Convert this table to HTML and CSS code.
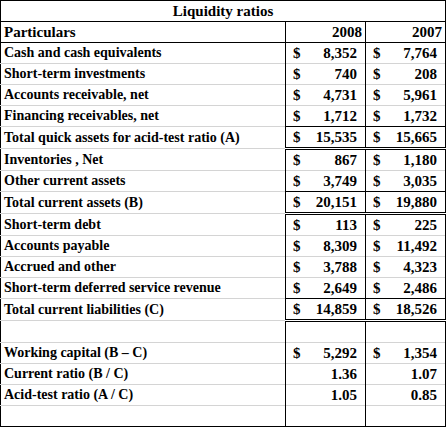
FILE: index.html
```html
<!DOCTYPE html>
<html lang="en">
<head>
    <meta charset="UTF-8">
    <title>Liquidity ratios</title>
    <link rel="stylesheet" href="styles.css">
</head>
<body>
    <table class="ratios">
        <colgroup>
            <col class="c-label">
            <col class="c-num">
            <col class="c-num">
        </colgroup>
        <tr class="title-row">
            <td colspan="3">Liquidity ratios</td>
        </tr>
        <tr class="head-row">
            <td class="label">Particulars</td>
            <td class="year">2008</td>
            <td class="year">2007</td>
        </tr>
        <tr>
            <td class="label">Cash and cash equivalents</td>
            <td class="amt"><span>$</span><span>8,352</span></td>
            <td class="amt"><span>$</span><span>7,764</span></td>
        </tr>
        <tr>
            <td class="label">Short-term investments</td>
            <td class="amt"><span>$</span><span>740</span></td>
            <td class="amt"><span>$</span><span>208</span></td>
        </tr>
        <tr>
            <td class="label">Accounts receivable, net</td>
            <td class="amt"><span>$</span><span>4,731</span></td>
            <td class="amt"><span>$</span><span>5,961</span></td>
        </tr>
        <tr>
            <td class="label">Financing receivables, net</td>
            <td class="amt"><span>$</span><span>1,712</span></td>
            <td class="amt"><span>$</span><span>1,732</span></td>
        </tr>
        <tr class="total">
            <td class="label">Total quick assets for acid-test ratio (A)</td>
            <td class="amt"><span>$</span><span>15,535</span></td>
            <td class="amt"><span>$</span><span>15,665</span></td>
        </tr>
        <tr>
            <td class="label">Inventories , Net</td>
            <td class="amt"><span>$</span><span>867</span></td>
            <td class="amt"><span>$</span><span>1,180</span></td>
        </tr>
        <tr>
            <td class="label">Other current assets</td>
            <td class="amt"><span>$</span><span>3,749</span></td>
            <td class="amt"><span>$</span><span>3,035</span></td>
        </tr>
        <tr class="total">
            <td class="label">Total current assets (B)</td>
            <td class="amt"><span>$</span><span>20,151</span></td>
            <td class="amt"><span>$</span><span>19,880</span></td>
        </tr>
        <tr>
            <td class="label">Short-term debt</td>
            <td class="amt"><span>$</span><span>113</span></td>
            <td class="amt"><span>$</span><span>225</span></td>
        </tr>
        <tr>
            <td class="label">Accounts payable</td>
            <td class="amt"><span>$</span><span>8,309</span></td>
            <td class="amt"><span>$</span><span>11,492</span></td>
        </tr>
        <tr>
            <td class="label">Accrued and other</td>
            <td class="amt"><span>$</span><span>3,788</span></td>
            <td class="amt"><span>$</span><span>4,323</span></td>
        </tr>
        <tr>
            <td class="label">Short-term deferred service revenue</td>
            <td class="amt"><span>$</span><span>2,649</span></td>
            <td class="amt"><span>$</span><span>2,486</span></td>
        </tr>
        <tr class="total">
            <td class="label">Total current liabilities (C)</td>
            <td class="amt"><span>$</span><span>14,859</span></td>
            <td class="amt"><span>$</span><span>18,526</span></td>
        </tr>
        <tr>
            <td class="label"></td>
            <td class="amt"></td>
            <td class="amt"></td>
        </tr>
        <tr>
            <td class="label">Working capital (B – C)</td>
            <td class="amt"><span>$</span><span>5,292</span></td>
            <td class="amt"><span>$</span><span>1,354</span></td>
        </tr>
        <tr>
            <td class="label">Current ratio (B / C)</td>
            <td class="amt"><span></span><span>1.36</span></td>
            <td class="amt"><span></span><span>1.07</span></td>
        </tr>
        <tr>
            <td class="label">Acid-test ratio (A / C)</td>
            <td class="amt"><span></span><span>1.05</span></td>
            <td class="amt"><span></span><span>0.85</span></td>
        </tr>
        <tr class="last">
            <td class="label"></td>
            <td class="amt"></td>
            <td class="amt"></td>
        </tr>
    </table>
</body>
</html>
```

FILE: styles.css
```css
body {
    margin: 0;
    background-color: #fff;
    color: #000;
    font-family: "Liberation Serif", "Times New Roman", serif;
    font-weight: bold;
    font-size: 15px;
}
.ratios {
    border-collapse: collapse;
    width: 445px;
    table-layout: fixed;
    border: 1px solid #000;
}
.c-label {
    width: 285px;
}
.c-num {
    width: 80px;
}
.ratios td {
    height: 20px;
    padding: 0;
    line-height: 20px;
    white-space: nowrap;
    overflow: hidden;
    border-top: 1px solid #d4d4d4;
}
.ratios td.amt, .ratios td.year {
    border-left: 1px solid #000;
    border-right: 1px solid #000;
}
.title-row td {
    text-align: center;
    border: 1px solid #000;
}
.head-row td {
    border-bottom: 1px solid #000;
}
.label {
    padding-left: 3px !important;
    font-size: 14px;
}
.head-row .label {
    font-size: 15px;
}
.year {
    text-align: right;
    padding-right: 3px !important;
}
.amt span {
    display: inline-block;
}
.amt {
    padding: 0 8px 0 7px !important;
}
.amt span:first-child {
    float: left;
}
.amt span:last-child {
    float: right;
}
.total td.amt {
    border-top: 1px solid #000;
    border-bottom: 3px double #000;
}
.last td {
    border-bottom: 1px solid #000;
}
```
